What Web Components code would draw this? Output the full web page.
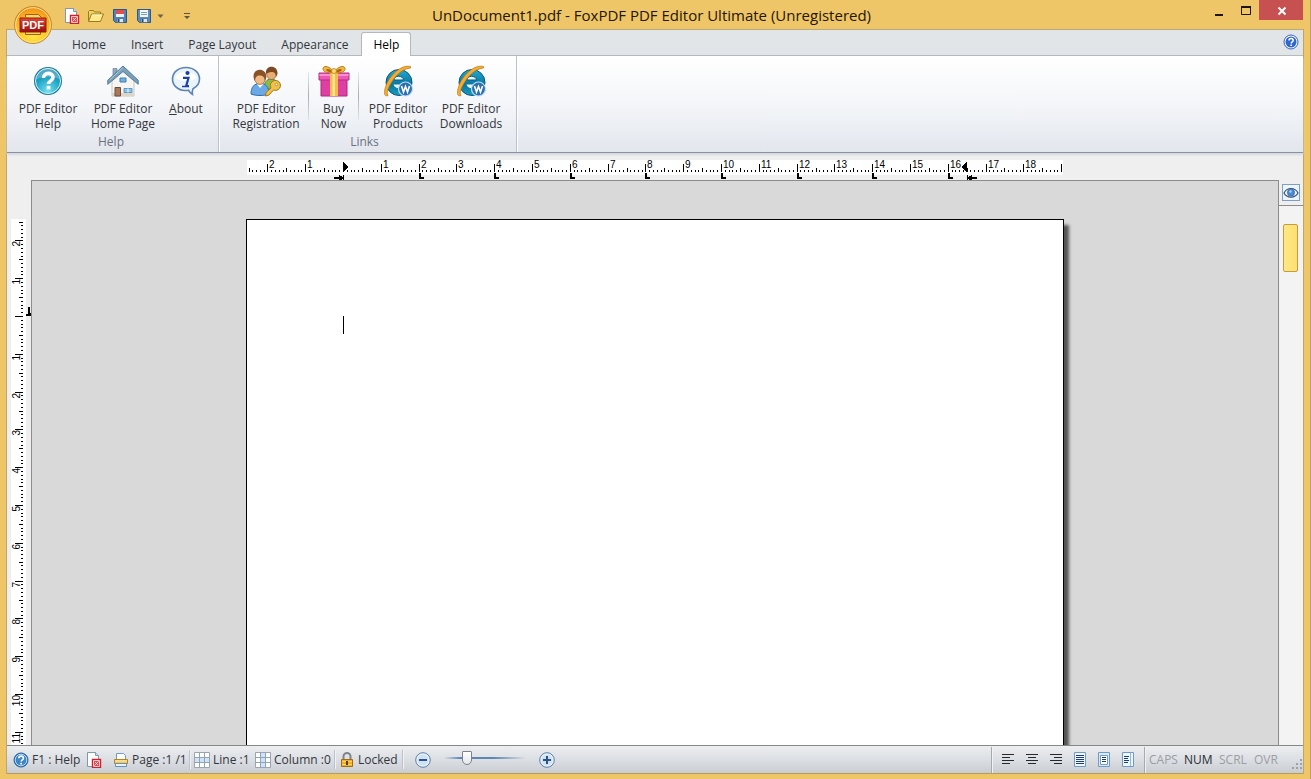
<!DOCTYPE html>
<html lang="en">
<head>
<meta charset="utf-8">
<title>UnDocument1.pdf - FoxPDF PDF Editor Ultimate</title>
<style>
html, body { margin: 0; height: 100%; }
body { font: 12px/15px "Open Sans", "Noto Sans", sans-serif; color: #33363d; overflow: hidden; }
</style>
</head>
<body>
<editor-window></editor-window>
<script>
const ICONS = {
  help: `<svg viewBox="0 0 32 32"><defs><radialGradient id="g" cx=".5" cy=".9" r=".9"><stop offset="0" stop-color="#6fe0f0"/><stop offset=".6" stop-color="#1fa3c4"/><stop offset="1" stop-color="#1583a8"/></radialGradient></defs><circle cx="16" cy="16" r="14" fill="#177c9c"/><circle cx="16" cy="16" r="12.500" fill="url(#g)" stroke="#d8f2f8" stroke-width="1"/><path d="M4.500 14a11.500 11 0 0 1 23 0c-7-3-16-3-23 0z" fill="#fff" opacity=".25"/><path d="M11.500 13c0-6 9.500-6 9.500-.700 0 3.700-4.500 3.400-4.500 6.700" fill="none" stroke="#fff" stroke-width="3.600"/><rect x="14.600" y="20.800" width="3.800" height="3.600" fill="#fff"/></svg>`,
  home: `<svg viewBox="0 0 32 32"><path d="M5 16L16 6l11 10v15H5z" fill="#f6f5f1" stroke="#c9c5bc"/><path d="M5 28h22v3H5z" fill="#ddd6c8"/><path d="M6 3.500h4v8H6z" fill="#8fa9bd" stroke="#6a8aa3" stroke-width=".7"/><path d="M16 1L.800 15.300l0 4L16 6.500l15.200 12.800v-4z" fill="#7ba0ba" stroke="#4f7b99"/><path d="M16 2.500L3 14.700" stroke="#a9c8dc" fill="none"/><path d="M13 13h6v4h-6z" fill="#6fb1df" stroke="#437fae"/><path d="M8 22.500h5.500V31H8z" fill="#a7785a" stroke="#6e4b38"/><path d="M17 23.500h8v4h-8z" fill="#8bc4ea" stroke="#5d98c4"/><path d="M21 23.500v4" stroke="#fff"/></svg>`,
  info: `<svg viewBox="0 0 32 32"><path d="M16 2.500c-8 0-13.500 5-13.500 11.500S8 25.500 15 25.500c1.500 0 2.500 0 3.500-.300 1 2 2.500 3.700 4 4.300-.500-2-.200-4 .500-5.800 4-2 6.500-5.700 6.500-9.700C29.500 7.500 24 2.500 16 2.500z" fill="#e9f3fc" stroke="#5c83b5" stroke-width="1.600"/><path d="M5 13C7 5 25 5 27 13c-7 4-15 4-22 0z" fill="#fff"/><circle cx="17.500" cy="8" r="2.100" fill="#1c3fae"/><path d="M13 12.800h5.500l-2.300 8.200h2.800" fill="none" stroke="#1c3fae" stroke-width="2.200"/><path d="M12 21.500h7" stroke="#1c3fae" stroke-width="1.500"/></svg>`,
  users: `<svg viewBox="0 0 32 32"><path d="M14 24c0-7 3-10 7-10s8 3 8 9l-1 1z" fill="#8dbb48" stroke="#55802a"/><ellipse cx="21.500" cy="9" rx="4.800" ry="5.500" fill="#e8ad75" stroke="#8f5c2c" stroke-width=".7"/><path d="M16 9c-1.500-9 12-10 11.500 0l-1.500 3c0-4-2-5-4.500-5S17.500 8 16 9z" fill="#7c4a22"/><path d="M1 29c0-7 3-10.500 9-10.500s9 3.500 9 10.500c-5 2-13 2-18 0z" fill="#6aa9e6" stroke="#2f6db0"/><path d="M7 19l3 4 3.500-4z" fill="#fff"/><ellipse cx="10" cy="13" rx="5.500" ry="6.500" fill="#efba85" stroke="#8f5c2c" stroke-width=".7"/><path d="M3.700 13c-2-11 14-11 12.500 0l-1.500 3c0-4-2-5.500-5-5.500S5.500 12 4.700 16z" fill="#8a5227"/><path d="M24.500 15.500a5 5 0 1 1-1 9.500l-4.500 5-3.500 1 .500-3.500 5-4.500a5 5 0 0 1 3.500-7.500z" fill="#f0c24a" stroke="#a87614"/><circle cx="26.500" cy="19.500" r="1.300" fill="#fff" stroke="#a87614" stroke-width=".7"/></svg>`,
  gift: `<svg viewBox="0 0 32 32"><path d="M3 14h26v17H3z" fill="#df3fa3" stroke="#a82a7c"/><path d="M1 8h30v7H1z" fill="#ee57b4" stroke="#b32f86"/><path d="M1.500 9h29v2h-29z" fill="#f78fd0"/><path d="M12 8h8v23h-8z" fill="#f6bd45"/><path d="M14.500 8h2.500v23h-2.500z" fill="#fde39a"/><path d="M16 7C10-1 3 1 5.500 5.500 7 8 12 8 16 7.500 20 8 25 8 26.500 5.500 29 1 22-1 16 7z" fill="#f7b93c" stroke="#b87a14"/><path d="M8 4.500c2-1.500 5 0 6.500 2.500-3 .300-6-.500-6.500-2.500zM24 4.500c-2-1.500-5 0-6.500 2.500 3 .300 6-.500 6.500-2.500z" fill="#a96611"/><circle cx="16" cy="6" r="2.500" fill="#ffd873" stroke="#b87a14" stroke-width=".7"/></svg>`,
  web: `<svg viewBox="0 0 32 32"><defs><linearGradient id="b" x2="0" y2="1"><stop stop-color="#25a9d0"/><stop offset=".6" stop-color="#08749f"/><stop offset="1" stop-color="#1aa0c4"/></linearGradient></defs><circle cx="17" cy="17.500" r="13" fill="url(#b)" stroke="#07577c"/><path d="M12 15c0-5 9-5 9.500 0z" fill="#e6f6fb" stroke="#075d84"/><path d="M11.500 19.500h10c-1 5-8.500 5-10 0z" fill="#e6f6fb"/><path d="M28.500 1.500C19-1 7 11 3.500 22c-2 6.500-1 10 2.500 8.500-1.500-2-.500-6 2-10.500C12 12.500 19 4 28.500 3z" fill="#f6ac2f" stroke="#bd7310" stroke-width=".7"/><circle cx="23.500" cy="24" r="7" fill="#2a70b2" stroke="#bfdcf0" stroke-width="1.200"/><path d="M19.500 21l2 6 2-5.500 2 5.500 2-6" fill="none" stroke="#fff" stroke-width="1.600"/></svg>`,
  pdfdoc: `<svg viewBox="0 0 16 16"><path d="M1.500.500h8l3 3v11h-11z" fill="#fbfdff" stroke="#8296b0"/><path d="M9.500.500v3h3" fill="#cfdeee" stroke="#8296b0"/><path d="M6.500 7.500h8v8h-8z" fill="#fff" stroke="#d1202c" stroke-width="1.400"/><path d="M8 9h5v5H8z" fill="#e34a52"/><path d="M8.500 13.500l4-4M9 10l3 3" stroke="#fff" stroke-width=".8"/></svg>`,
  folder: `<svg viewBox="0 0 16 16"><path d="M.500 13V3.500l1-1h4l1 1.500h6v3" fill="#f0d265" stroke="#9a7c1c"/><path d="M.500 13.500l3-7.500h12l-3 7.500z" fill="#ffe98c" stroke="#9a7c1c"/><path d="M4 7h10" stroke="#fff7c5"/></svg>`,
  save: `<svg viewBox="0 0 16 16"><path d="M1.500 1.500h13v13h-11l-2-2z" fill="#4a83bd" stroke="#2b5685"/><path d="M4 2h8v5H4z" fill="#dd4f50"/><path d="M4 6h8v3H4z" fill="#eef1f5"/><path d="M4.500 10.500h7v4h-7z" fill="#dfe5ec" stroke="#35669a" stroke-width=".7"/><path d="M5.500 11h2v3h-2z" fill="#244b75"/></svg>`,
  saveas: `<svg viewBox="0 0 16 16"><path d="M1.500 1.500h13v13h-11l-2-2z" fill="#5b8cbd" stroke="#2c5882"/><path d="M4 2h8v7H4z" fill="#f4f7fa"/><path d="M5 4.500h6M5 6.500h6" stroke="#7a9fc2"/><path d="M4.500 10.500h7v4h-7z" fill="#dfe5ec" stroke="#35669a" stroke-width=".7"/><path d="M5.500 11h2v3h-2z" fill="#244b75"/></svg>`,
  q: `<svg viewBox="0 0 16 16"><circle cx="8" cy="8" r="7" fill="#3d86c6" stroke="#1f5c98"/><circle cx="8" cy="8" r="5.800" fill="none" stroke="#c6e2f5" stroke-width=".9"/><path d="M5.800 6.300c0-3 4.600-2.900 4.600-.100 0 1.700-2.200 1.700-2.200 3.400" fill="none" stroke="#fff" stroke-width="1.600"/><path d="M7.300 10.800h1.800v1.700H7.300z" fill="#fff"/></svg>`,
  qround: `<svg viewBox="0 0 16 16"><circle cx="8" cy="8" r="7" fill="#fff" stroke="#2f62c0"/><circle cx="8" cy="8" r="5.500" fill="#2f66cc"/><path d="M6 6.500c0-2.700 4.200-2.600 4.200-.100 0 1.500-2 1.500-2 3" fill="none" stroke="#fff" stroke-width="1.500"/><path d="M7.400 10.400h1.600v1.600H7.400z" fill="#fff"/></svg>`,
  printer: `<svg viewBox="0 0 16 16"><path d="M3.500 1.500h7l2 2v4h-9z" fill="#fff" stroke="#6f9ac4"/><path d="M1.500 7.500h13v4h-13z" fill="#f8c552" stroke="#b78318"/><path d="M2 9h12" stroke="#fff0b8"/><path d="M2.500 11.500h11v3h-11z" fill="#eaf3fb" stroke="#5c91c6"/></svg>`,
  rowgrid: `<svg viewBox="0 0 16 16"><path d="M.500.500h15v15H.500z" fill="#fff" stroke="#9aa4b2"/><path d="M1 6h14v4H1z" fill="#cfe3f4"/><path d="M5.500.500v15M10.500.500v15M.500 5.500h15M.500 10.500h15" stroke="#8fa3ba"/></svg>`,
  colgrid: `<svg viewBox="0 0 16 16"><path d="M.500.500h15v15H.500z" fill="#fff" stroke="#9aa4b2"/><path d="M6 1h4v14H6z" fill="#cfe3f4"/><path d="M5.500.500v15M10.500.500v15M.500 5.500h15M.500 10.500h15" stroke="#8fa3ba"/></svg>`,
  lock: `<svg viewBox="0 0 16 16"><path d="M4.500 8V4.500a3.500 3.500 0 0 1 7 0V8" fill="none" stroke="#7d838c" stroke-width="2"/><path d="M2.500 7.500h11v7h-11z" fill="#f5af26" stroke="#a66c0c"/><path d="M3 9.500h10M3 12.500h10" stroke="#ffd673"/><path d="M7 9h2v4H7z" fill="#5c3a06"/></svg>`,
  minus: `<svg viewBox="0 0 16 16"><circle cx="8" cy="8" r="7.300" fill="#eaf3fb" stroke="#5a7ea8"/><circle cx="8" cy="8" r="5.500" fill="#cfe2f3"/><path d="M4 8h8" stroke="#2c5384" stroke-width="2"/></svg>`,
  plus: `<svg viewBox="0 0 16 16"><circle cx="8" cy="8" r="7.300" fill="#eaf3fb" stroke="#5a7ea8"/><circle cx="8" cy="8" r="5.500" fill="#cfe2f3"/><path d="M4 8h8M8 4v8" stroke="#2c5384" stroke-width="2"/></svg>`,
  left: `<svg viewBox="0 0 16 16"><path d="M2 2.500h12M2 5.500h8M2 8.500h12M2 11.500h8" stroke="#26282e"/></svg>`,
  center: `<svg viewBox="0 0 16 16"><path d="M2 2.500h12M4 5.500h8M2 8.500h12M4 11.500h8" stroke="#26282e"/></svg>`,
  right: `<svg viewBox="0 0 16 16"><path d="M2 2.500h12M6 5.500h8M2 8.500h12M6 11.500h8" stroke="#26282e"/></svg>`,
  viewa: `<svg viewBox="0 0 16 16"><path d="M2.500.500h11v14h-11z" fill="#eef6fd" stroke="#6f9bcb"/><path d="M4 3.500h8M4 5.500h8M4 7.500h8M4 9.500h8M4 11.500h8" stroke="#1f3f74"/></svg>`,
  viewb: `<svg viewBox="0 0 16 16"><path d="M2.500.500h11v14h-11z" fill="#d9eafa" stroke="#6f9bcb"/><path d="M4.500 3.500h7v9h-7z" fill="#fff" stroke="#6f9bcb"/><path d="M6 5.500h4M6 7.500h4M6 9.500h4" stroke="#1f3f74"/></svg>`,
  viewc: `<svg viewBox="0 0 16 16"><path d="M2.500.500h11v14h-11z" fill="#eef6fd" stroke="#6f9bcb"/><path d="M10.500 1v13" stroke="#6f9bcb" stroke-width=".7"/><path d="M4 4.500h5M4 6.500h4M4 8.500h5M4 10.500h4" stroke="#1f3f74"/></svg>`,
  eye: `<svg viewBox="0 0 16 16"><path d="M1 8c3-6 11-6 14 0-3 5.500-11 5.500-14 0z" fill="#f5faff" stroke="#33507c" stroke-width="1.200"/><circle cx="8" cy="7.500" r="3.600" fill="#4c8ad0" stroke="#2b5c9c" stroke-width=".7"/><circle cx="7.500" cy="6.500" r="1.200" fill="#a8d3f7"/></svg>`,
  drop: `<svg viewBox="0 0 8 8"><path d="M1.500 2.500h6L4.500 6z" fill="#6d6243"/></svg>`,
  custom: `<svg viewBox="0 0 8 8"><path d="M2 1.500h6" stroke="#5f563e"/><path d="M2 4h6L5 7z" fill="#5f563e"/></svg>`,
  min: `<svg viewBox="0 0 16 16"><path d="M4 13h8" stroke="#1d1607" stroke-width="2"/></svg>`,
  max: `<svg viewBox="0 0 16 16"><path d="M3.500 5.500h9v7h-9z" fill="none" stroke="#1d1607"/><path d="M3 5h10" stroke="#1d1607" stroke-width="2"/></svg>`,
  close: `<svg viewBox="0 0 16 16"><path d="M5.500 5.500l7 7M12.500 5.500l-7 7" stroke="#fff" stroke-width="2"/></svg>`,
  grip: `<svg viewBox="0 0 14 14"><path d="M11 2h2v2h-2zM7 6h2v2H7zM11 6h2v2h-2zM3 10h2v2H3zM7 10h2v2H7zM11 10h2v2h-2z" fill="#9da1a8"/></svg>`
};

function define(name, html, setup) {
  const template = document.createElement("template");
  template.innerHTML = html;
  customElements.define(name, class extends HTMLElement {
    connectedCallback() {
      if (this.shadowRoot) return;
      this.attachShadow({ mode: "open" }).append(template.content.cloneNode(true));
      if (setup) setup(this, this.shadowRoot);
    }
  });
}

const RESET = `button{font:inherit;color:inherit;background:none;border:0;padding:0;margin:0;display:flex;align-items:center;justify-content:center}`;

define("ui-icon", `<style>
:host{display:block;flex:none;width:var(--size,16px);height:var(--size,16px)}
svg{display:block;width:100%;height:100%}
</style>`, (host, root) => root.append(document.createRange().createContextualFragment(ICONS[host.getAttribute("name")])));

define("app-orb", `<style>
:host{display:block;width:40px;height:40px}${RESET}
button{width:100%;height:100%}svg{display:block}
</style><button aria-label="Application menu"><svg width="40" height="40" viewBox="0 0 40 40">
<defs><radialGradient id="o" cx=".5" cy=".7" r=".7"><stop stop-color="#fff04c"/><stop offset=".5" stop-color="#ffc928"/><stop offset="1" stop-color="#ee8a14"/></radialGradient>
<linearGradient id="r" x2="0" y2="1"><stop stop-color="#e0483a"/><stop offset="1" stop-color="#9c0d0b"/></linearGradient></defs>
<circle cx="20" cy="20" r="18.500" fill="url(#o)" stroke="#c9882a"/><circle cx="20" cy="20" r="17.300" fill="none" stroke="#ffe7a0"/>
<path d="M12.500 12V9.500h13l3 3V15M12.500 27v2.500h15V27" fill="#ffd95e" stroke="#b4541a"/>
<path d="M7 13h26v14H7z" fill="url(#r)" stroke="#8d1a10"/>
<text x="20" y="24" text-anchor="middle" font-family="Liberation Sans" font-weight="700" font-size="11" fill="#fff">PDF</text></svg></button>`);

define("title-bar", `<style>
:host{display:grid;grid-template-columns:1fr auto 1fr;height:29px;padding-right:8px;color:#241505}${RESET}
.quick{display:flex;align-items:center;gap:8px;padding-left:64px}
.more{margin-left:-4px;--size:8px}.custom{margin-left:10px;--size:8px}
h1{margin:0;font:inherit;font-size:15px;line-height:31px;white-space:nowrap}
.win{display:flex;justify-content:flex-end;align-items:flex-start}
.win button{width:27px;height:20px}
.win .close{width:44px;background:#c75050}
</style>
<div class="quick"><button aria-label="New"><ui-icon name="pdfdoc"></ui-icon></button><button aria-label="Open"><ui-icon name="folder"></ui-icon></button><button aria-label="Save"><ui-icon name="save"></ui-icon></button><button aria-label="Save as"><ui-icon name="saveas"></ui-icon></button><button class="more" aria-label="Save options"><ui-icon name="drop"></ui-icon></button><button class="custom" aria-label="Customize"><ui-icon name="custom"></ui-icon></button></div>
<h1><slot></slot></h1>
<div class="win"><button aria-label="Minimize"><ui-icon name="min"></ui-icon></button><button aria-label="Maximize"><ui-icon name="max"></ui-icon></button><button class="close" aria-label="Close"><ui-icon name="close"></ui-icon></button></div>`);

define("ribbon-tab", `<style>
:host{display:block}${RESET}
button{height:24px;padding:0 11px;border:1px solid transparent;border-bottom:0;border-radius:3px 3px 0 0;line-height:24px}
:host([active]) button{height:24px;background:#fff;border-color:#b4b9c0;color:#000}
</style><button role="tab"><slot></slot></button>`, (host, root) => root.querySelector("button").setAttribute("aria-selected", host.hasAttribute("active")));

define("ribbon-tabs", `<style>
:host{display:flex;justify-content:space-between;align-items:flex-end;height:25px;background:#e1e5e8;border-top:1px solid #b9a878;border-bottom:1px solid #b4b9c0;padding:0 4px 0 53px}
.tabs{display:flex;align-items:flex-end;gap:1px;margin-bottom:-1px}
${RESET} button{align-self:flex-start;margin-top:4px}
</style><div class="tabs" role="tablist"><slot></slot></div><button aria-label="Help"><ui-icon name="qround"></ui-icon></button>`);

define("ribbon-command", `<style>
:host{display:block;flex:none;width:var(--w)}${RESET}
button{width:100%;flex-direction:column;gap:4px;--size:32px}
span{text-align:center;line-height:15px;white-space:nowrap}
</style><button><span><slot></slot></span></button>`, (host, root) => {
  const icon = document.createElement("ui-icon");
  icon.setAttribute("name", host.getAttribute("icon"));
  root.querySelector("button").prepend(icon);
});

define("ribbon-group", `<style>
:host{display:flex;flex-direction:column;justify-content:space-between;box-sizing:border-box;padding:9px var(--pad-right) 3px var(--pad-left);border-right:1px solid #bcc2cc;box-shadow:1px 0 #fff}
.row{display:flex}
footer{text-align:center;color:#6a7280}
</style><div class="row"><slot></slot></div><footer></footer>`, (host, root) => root.querySelector("footer").textContent = host.getAttribute("label"));

define("ribbon-panel", `<style>
:host{display:flex;height:96px;background:linear-gradient(#fff,#f4f6f9 50%,#e2e6ed);border-bottom:1px solid #8b909c;box-shadow:0 2px 2px #d5dae3;position:relative}
.h{--pad-left:7px;--pad-right:10px}.l{--pad-left:5px;--pad-right:11px}
.sep{width:1px;height:48px;margin-top:7px;background:linear-gradient(#e6e8ec,#a9adb5,#e0e3e8)}
</style>
<ribbon-group class="h" label="Help">
<ribbon-command icon="help" style="--w:68px">PDF Editor<br>Help</ribbon-command><ribbon-command icon="home" style="--w:82px">PDF Editor<br>Home Page</ribbon-command><ribbon-command icon="info" style="--w:44px"><u>A</u>bout</ribbon-command>
</ribbon-group>
<ribbon-group class="l" label="Links">
<ribbon-command icon="users" style="--w:84px">PDF Editor<br>Registration</ribbon-command><div class="sep"></div><ribbon-command icon="gift" style="--w:49px">Buy<br>Now</ribbon-command><div class="sep"></div><ribbon-command icon="web" style="--w:78px">PDF Editor<br>Products</ribbon-command><ribbon-command icon="web" style="--w:68px">PDF Editor<br>Downloads</ribbon-command>
</ribbon-group>`);

/* Centimetre rulers: ten divisions to a centimetre at 96 dots to the inch. */
const CM = 37.8;
const FONT = `font-family="Liberation Sans" font-size="10" fill="#000"`;

define("ruler-h", `<style>:host{display:block;width:818px}svg{display:block}</style>`, (host, root) => {
  const zero = 97;
  let out = `<rect x="1" y="7" width="816" height="15" fill="#fff"/>`;
  for (let i = -25; i <= 190; i++) {
    const x = Math.round(zero + i * CM / 10);
    const whole = i % 10 === 0, half = i % 5 === 0;
    const h = whole ? 8 : half ? 4 : 2;
    out += `<rect x="${x}" y="${19 - h}" width="1" height="${h}"/>`;
    if (whole && i && i < 190) out += `<text x="${x + 2}" y="15" ${FONT}>${Math.abs(i / 10)}</text>`;
    if (whole && i > 0 && i % 20 === 0 && i <= 160) out += `<path d="M${x} 20h2v4h3v2h-5z"/>`;
  }
  out += `<path d="M${zero} 9l5 5-5 5zM${zero - 9} 24h5v-2l4 2v-2h1v6h-1v-2l-4 2v-2h-5z"/>`;
  const end = Math.round(zero + 16.5 * CM);
  out += `<path d="M${end} 8l-6 6 6 6zM${end} 22h1v2l4-2v2h5v2h-5v2l-4-2v2h-1z"/>`;
  root.append(document.createRange().createContextualFragment(`<svg width="818" height="27" shape-rendering="crispEdges">${out}</svg>`));
});

define("ruler-v", `<style>:host{display:block;overflow:hidden;min-height:0}svg{display:block}</style>`, (host, root) => {
  const zero = 136;
  let out = `<rect x="4" y="39" width="15" height="1055" fill="#fff"/>`;
  for (let i = -25; i <= 114; i++) {
    const y = Math.round(zero + i * CM / 10);
    const whole = i % 10 === 0, half = i % 5 === 0;
    const w = whole ? 8 : half ? 4 : 2;
    out += `<rect x="${16 - w}" y="${y}" width="${w}" height="1"/>`;
    if (whole && i) out += `<text transform="translate(13 ${y + 1}) rotate(-90)" text-anchor="end" ${FONT}>${Math.abs(i / 10)}</text>`;
  }
  out += `<path d="M21 ${zero - 9}h2v6h1v3h-5v-2h2z"/>`;
  root.append(document.createRange().createContextualFragment(`<svg width="24" height="1100" shape-rendering="crispEdges">${out}</svg>`));
});

define("document-page", `<style>
:host{display:block;box-sizing:border-box;flex:none;width:818px;min-height:1058px;padding:96px;border:1px solid #000;background:#fff;box-shadow:6px 5px 3px -1px #555}
div{width:1px;height:18px;background:#000}
</style><div role="textbox" aria-label="Document text"></div>`);

define("work-area", `<style>
:host{display:grid;grid-template-columns:24px minmax(0,1fr) 24px;grid-template-rows:27px minmax(0,1fr);min-height:0;background:#efefef}
.top{display:flex;justify-content:center;padding:0 1px;overflow:hidden}
.desk{display:flex;justify-content:center;align-items:flex-start;overflow:hidden;background:#d9d9d9;border:1px solid #8c8c8c;border-bottom:0;padding-top:38px}
.side{grid-column:3;grid-row:1/3;display:flex;flex-direction:column;margin-top:27px;background:#f3f3f3}
.eye{height:25px;background:#efefef;border-bottom:1px solid #8c8c8c;display:flex;align-items:center;justify-content:center}
${RESET}
.eye button{width:18px;height:17px;box-sizing:border-box;border:1px solid #7f9fc0;background:#edf4fb;--size:16px}
.thumb{box-sizing:border-box;width:15px;height:48px;margin:18px 0 0 4px;border:1px solid #c69b3e;border-radius:2px;background:linear-gradient(90deg,#fde884,#fddf70)}
</style>
<span></span><div class="top"><ruler-h></ruler-h></div>
<ruler-v></ruler-v><div class="desk"><document-page></document-page></div>
<div class="side"><div class="eye"><button aria-label="View options"><ui-icon name="eye"></ui-icon></button></div><div class="thumb" role="scrollbar" aria-label="Vertical scroll" aria-valuenow="0"></div></div>`);

define("status-item", `<style>
:host{display:flex;align-items:center;gap:3px;white-space:nowrap;width:var(--w);flex:none}
</style><slot></slot>`);

define("zoom-slider", `<style>
:host{display:flex;align-items:center;gap:13px}${RESET}
input{appearance:none;width:82px;height:20px;margin:0;background:linear-gradient(90deg,#5e86b200,#5e86b2 20%,#5e86b2 60%,#5e86b200) 0 7px/100% 2px no-repeat}
input::-webkit-slider-thumb{appearance:none;width:10px;height:14px;margin-top:-4px;background:linear-gradient(#fff,#e4e6ea);border:1px solid #7b828c;border-radius:1px 1px 5px 5px;box-sizing:border-box}
</style><button aria-label="Zoom out"><ui-icon name="minus"></ui-icon></button><input type="range" min="0" max="100" value="25" aria-label="Zoom"><button aria-label="Zoom in"><ui-icon name="plus"></ui-icon></button>`);

define("status-bar", `<style>
:host{display:flex;justify-content:space-between;height:27px;border-top:1px solid #83878e;border-bottom:1px solid #b59b5c;background:linear-gradient(#eceef0,#dcdfe3 50%,#c9ccd1)}
.side{display:flex;align-items:center}
.sep{width:1px;height:19px;background:#bec2c8;box-shadow:1px 0 #f1f2f4}
.tall{height:26px;background:#a5a9b0}
.left{padding-left:6px}.left zoom-slider{margin-left:12px}
${RESET}
.views{display:flex;gap:8px;padding:0 8px}
.key{width:35px;color:#9b9ea4}.key.on{color:#2b2e34}
</style>
<div class="side left">
<status-item style="--w:73px"><ui-icon name="q"></ui-icon>F1 : Help</status-item>
<status-item style="--w:27px"><ui-icon name="pdfdoc"></ui-icon></status-item>
<status-item style="--w:76px"><ui-icon name="printer"></ui-icon>Page :1 /1</status-item><div class="sep"></div>
<status-item style="--w:61px;margin-left:4px"><ui-icon name="rowgrid"></ui-icon>Line :1</status-item>
<status-item style="--w:79px"><ui-icon name="colgrid"></ui-icon>Column :0</status-item><div class="sep"></div>
<status-item style="--w:63px;margin-left:4px"><ui-icon name="lock"></ui-icon>Locked</status-item><div class="sep"></div>
<zoom-slider></zoom-slider></div>
<div class="side"><div class="sep tall"></div><div class="views">
<button aria-label="Align left"><ui-icon name="left"></ui-icon></button><button aria-label="Center"><ui-icon name="center"></ui-icon></button><button aria-label="Align right"><ui-icon name="right"></ui-icon></button><button aria-label="Normal view"><ui-icon name="viewa"></ui-icon></button><button aria-label="Page view"><ui-icon name="viewb"></ui-icon></button><button aria-label="Web view"><ui-icon name="viewc"></ui-icon></button></div>
<div class="sep tall" style="margin-right:4px"></div>
<span class="key">CAPS</span><span class="key on">NUM</span><span class="key">SCRL</span><span class="key">OVR</span><ui-icon name="grip" style="--size:14px;margin-top:8px"></ui-icon></div>`);

define("editor-window", `<style>
:host{display:flex;flex-direction:column;height:100vh;box-sizing:border-box;background:#efc667;position:relative;border-right:1px solid #c2a35a}
app-orb{position:absolute;left:13px;top:5px}
main{flex:1;min-height:0;display:grid;grid-template-rows:auto auto minmax(0,1fr) auto;grid-template-columns:minmax(0,1fr);margin:0 6px 5px;border:1px solid #bfa566;border-width:0 1px}
title-bar{margin-right:-1px}
</style>
<title-bar>UnDocument1.pdf - FoxPDF PDF Editor Ultimate (Unregistered)</title-bar>
<main><ribbon-tabs><ribbon-tab>Home</ribbon-tab><ribbon-tab>Insert</ribbon-tab><ribbon-tab>Page Layout</ribbon-tab><ribbon-tab>Appearance</ribbon-tab><ribbon-tab active>Help</ribbon-tab></ribbon-tabs>
<ribbon-panel></ribbon-panel><work-area></work-area><status-bar></status-bar></main>
<app-orb></app-orb>`);
</script>
</body>
</html>
